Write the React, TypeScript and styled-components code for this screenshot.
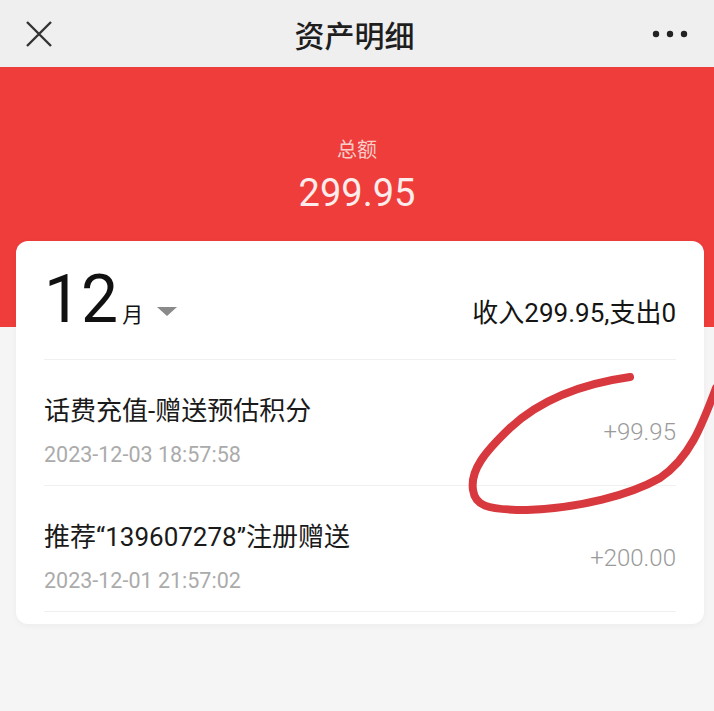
import React from 'react'
import styled, { createGlobalStyle } from 'styled-components'

const GlobalStyle = createGlobalStyle`
  html, body {
    margin: 0;
    padding: 0;
    background: #f5f5f5;
    font-family: Roboto, "Noto Sans CJK SC", sans-serif;
  }
`

type Record = {
  title: string
  time: string
  amount: string
}

const records: Record[] = [
  { title: '话费充值-赠送预估积分', time: '2023-12-03 18:57:58', amount: '+99.95' },
  { title: '推荐“139607278”注册赠送', time: '2023-12-01 21:57:02', amount: '+200.00' },
]

const App: React.FC = () => {
  return (
    <Page>
      <GlobalStyle />
      <NavBar>
        <NavButton aria-label="关闭">
          <svg width="28" height="28" viewBox="0 0 28 28">
            <path d="M2 2 L26 26 M26 2 L2 26" stroke="#333" strokeWidth="2.4" fill="none" />
          </svg>
        </NavButton>
        <NavTitle>资产明细</NavTitle>
        <NavButton aria-label="更多">
          <svg width="36" height="8" viewBox="0 0 36 8">
            <circle cx="4" cy="4" r="3.2" fill="#222" />
            <circle cx="18" cy="4" r="3.2" fill="#222" />
            <circle cx="32" cy="4" r="3.2" fill="#222" />
          </svg>
        </NavButton>
      </NavBar>

      <Main>
        <Summary>
          <SummaryLabel>总额</SummaryLabel>
          <SummaryValue>299.95</SummaryValue>
        </Summary>

        <Card>
          <CardHeader>
            <MonthPicker>
              <MonthNumber>12</MonthNumber>
              <MonthUnit>月</MonthUnit>
              <Caret width="20" height="9" viewBox="0 0 20 9">
                <path d="M0 0 L20 0 L10 9 Z" fill="#8a8a8a" />
              </Caret>
            </MonthPicker>
            <MonthTotal>收入299.95,支出0</MonthTotal>
          </CardHeader>

          {records.map((r) => (
            <Row key={r.time}>
              <RowInfo>
                <RowTitle>{r.title}</RowTitle>
                <RowTime>{r.time}</RowTime>
              </RowInfo>
              <RowAmount>{r.amount}</RowAmount>
            </Row>
          ))}
        </Card>
      </Main>

      <Scribble width="714" height="711" viewBox="0 0 714 711">
        <path
          d="M630 377 C 580 384, 540 400, 510 428 C 485 452, 470 470, 473 490 C 475 505, 485 510, 527 510 C 580 508, 630 495, 660 478 C 690 458, 702 425, 716 388"
          stroke="#d8393e"
          strokeWidth="8"
          strokeLinecap="round"
          fill="none"
        />
      </Scribble>
    </Page>
  )
}

const Page = styled.div`
  position: relative;
  width: 714px;
  min-height: 711px;
  background: #f5f5f5;
  overflow: hidden;
`

const NavBar = styled.div`
  height: 67px;
  background: #efefef;
  display: flex;
  align-items: center;
  justify-content: space-between;
  padding: 0 26px 0 21px;
`

const NavButton = styled.div`
  display: flex;
  align-items: center;
  justify-content: center;
  width: 36px;
  height: 36px;
`

const NavTitle = styled.div`
  font-size: 30px;
  font-weight: 500;
  color: #1e1e1e;
`

const Main = styled.div`
  background: linear-gradient(#ee3d3a 0, #ee3d3a 260px, #f5f5f5 260px);
  padding-bottom: 80px;
`

const Summary = styled.div`
  display: flex;
  flex-direction: column;
  align-items: center;
  padding-top: 69px;
  height: 174px;
  box-sizing: border-box;
`

const SummaryLabel = styled.div`
  font-size: 20px;
  line-height: 28px;
  color: #f8cdca;
`

const SummaryValue = styled.div`
  margin-top: 6px;
  font-size: 38px;
  line-height: 46px;
  color: #fdeceb;
`

const Card = styled.div`
  margin: 0 10px 0 16px;
  background: #fff;
  border-radius: 12px;
  padding: 0 28px 12px 28px;
  box-shadow: 0 2px 6px rgba(0, 0, 0, 0.04);
`

const CardHeader = styled.div`
  height: 119px;
  box-sizing: border-box;
  padding-top: 26px;
  display: flex;
  align-items: baseline;
  justify-content: space-between;
  border-bottom: 1px solid #f0f0f0;
`

const MonthPicker = styled.div`
  color: #111;
`

const MonthNumber = styled.span`
  font-size: 66px;
  line-height: 66px;
`

const MonthUnit = styled.span`
  margin-left: 4px;
  font-size: 21px;
`

const Caret = styled.svg`
  margin-left: 14px;
  vertical-align: 6px;
`

const MonthTotal = styled.div`
  font-size: 26px;
  color: #151515;
`

const Row = styled.div`
  height: 126px;
  box-sizing: border-box;
  padding-top: 18px;
  display: flex;
  align-items: center;
  justify-content: space-between;
  border-bottom: 1px solid #f0f0f0;
`

const RowInfo = styled.div`
  display: flex;
  flex-direction: column;
  gap: 14px;
`

const RowTitle = styled.div`
  font-size: 26px;
  line-height: 32px;
  color: #1a1a1a;
`

const RowTime = styled.div`
  font-size: 21.5px;
  line-height: 28px;
  color: #ababab;
`

const RowAmount = styled.div`
  font-size: 24px;
  font-weight: 300;
  color: #9a9a9a;
`

const Scribble = styled.svg`
  position: absolute;
  top: 0;
  left: 0;
  pointer-events: none;
`

export default App
